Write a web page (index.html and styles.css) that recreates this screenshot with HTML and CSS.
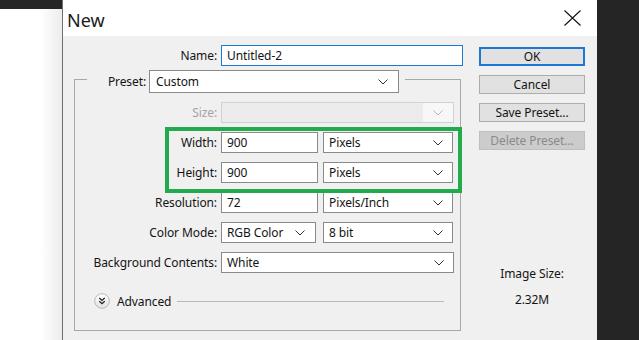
FILE: index.html
```html
<!DOCTYPE html>
<html>
<head>
<meta charset="utf-8">
<link rel="stylesheet" href="styles.css">
</head>
<body>
<div class="screen">
  <div class="backdrop">
    <div class="backdrop-bar"></div>
  </div>
  <div class="dialog">
    <div class="titlebar">
      <span class="title">New</span>
      <svg class="close" width="17" height="16" viewBox="0 0 17 16"><path d="M0.5 0.5 L16.5 15.5 M16.5 0.5 L0.5 15.5" stroke="#111" stroke-width="1.1" fill="none"/></svg>
    </div>
    <div class="content">
      <div class="form">
        <div class="row name-row">
          <label class="lbl name-lbl">Name:</label>
          <div class="field name-field focused">Untitled-2</div>
        </div>
        <fieldset class="group">
          <legend class="legend">
            <span class="legend-lbl">Preset:</span>
            <div class="field select preset-select">Custom<svg class="chev" width="10" height="6" viewBox="0 0 10 6"><polyline points="0.5,0.5 5,5 9.5,0.5" fill="none" stroke="#333" stroke-width="1"/></svg></div>
          </legend>
          <div class="row">
            <label class="lbl disabled-lbl">Size:</label>
            <div class="field select disabled full"><span class="dis-arrow"><svg class="chev" width="10" height="6" viewBox="0 0 10 6"><polyline points="0.5,0.5 5,5 9.5,0.5" fill="none" stroke="#b8b8b8" stroke-width="1"/></svg></span></div>
          </div>
          <div class="row">
            <label class="lbl">Width:</label>
            <div class="field num">900</div>
            <div class="field select unit">Pixels<svg class="chev" width="10" height="6" viewBox="0 0 10 6"><polyline points="0.5,0.5 5,5 9.5,0.5" fill="none" stroke="#333" stroke-width="1"/></svg></div>
          </div>
          <div class="row">
            <label class="lbl">Height:</label>
            <div class="field num">900</div>
            <div class="field select unit">Pixels<svg class="chev" width="10" height="6" viewBox="0 0 10 6"><polyline points="0.5,0.5 5,5 9.5,0.5" fill="none" stroke="#333" stroke-width="1"/></svg></div>
          </div>
          <div class="row">
            <label class="lbl">Resolution:</label>
            <div class="field num">72</div>
            <div class="field select unit">Pixels/Inch<svg class="chev" width="10" height="6" viewBox="0 0 10 6"><polyline points="0.5,0.5 5,5 9.5,0.5" fill="none" stroke="#333" stroke-width="1"/></svg></div>
          </div>
          <div class="row">
            <label class="lbl">Color Mode:</label>
            <div class="field select mode">RGB Color<svg class="chev" width="10" height="6" viewBox="0 0 10 6"><polyline points="0.5,0.5 5,5 9.5,0.5" fill="none" stroke="#333" stroke-width="1"/></svg></div>
            <div class="field select bits">8 bit<svg class="chev" width="10" height="6" viewBox="0 0 10 6"><polyline points="0.5,0.5 5,5 9.5,0.5" fill="none" stroke="#333" stroke-width="1"/></svg></div>
          </div>
          <div class="row">
            <label class="lbl">Background Contents:</label>
            <div class="field select full">White<svg class="chev" width="10" height="6" viewBox="0 0 10 6"><polyline points="0.5,0.5 5,5 9.5,0.5" fill="none" stroke="#333" stroke-width="1"/></svg></div>
          </div>
          <div class="advanced">
            <svg class="adv-icon" width="16" height="16" viewBox="0 0 16 16">
              <defs><linearGradient id="g" x1="0" y1="0" x2="0" y2="1"><stop offset="0" stop-color="#ffffff"/><stop offset="1" stop-color="#e2e2e2"/></linearGradient></defs>
              <circle cx="8" cy="8" r="7.3" fill="url(#g)" stroke="#b9b9b9" stroke-width="1"/>
              <polyline points="5.3,5 8,7.4 10.7,5" fill="none" stroke="#222" stroke-width="1.3"/>
              <polyline points="5.3,8.3 8,10.7 10.7,8.3" fill="none" stroke="#222" stroke-width="1.3"/>
            </svg>
            <span class="adv-text">Advanced</span>
            <span class="adv-line"></span>
          </div>
        </fieldset>
      </div>
      <div class="side">
        <button class="btn ok">OK</button>
        <button class="btn">Cancel</button>
        <button class="btn">Save Preset...</button>
        <button class="btn off">Delete Preset...</button>
        <div class="size-lbl">Image Size:</div>
        <div class="size-val">2.32M</div>
      </div>
    </div>
  </div>
  <div class="dark-right"></div>
  <div class="highlight"></div>
</div>
</body>
</html>
```

FILE: styles.css
```css
* { box-sizing: border-box; }
html, body { margin: 0; padding: 0; }
body {
  width: 639px;
  height: 340px;
  overflow: hidden;
  font-family: "Noto Sans", "Open Sans", sans-serif;
  font-size: 12px;
  letter-spacing: -0.1px;
  color: #141414;
}
.screen {
  position: relative;
  display: flex;
  width: 639px;
  height: 340px;
}
.backdrop {
  width: 62px;
  height: 340px;
  background: linear-gradient(to right, #ffffff 0, #ffffff 40px, #ececec 62px);
}
.backdrop-bar {
  height: 9px;
  background: #262626;
}
.dialog {
  width: 535px;
  height: 340px;
  border-left: 1px solid #6f6f6f;
  background: #f0f0f0;
  display: flex;
  flex-direction: column;
}
.titlebar {
  height: 36px;
  background: #ffffff;
  display: flex;
  align-items: center;
  justify-content: space-between;
  padding: 0 16px 0 4px;
}
.title {
  font-size: 18px;
  letter-spacing: 0;
  color: #1a1a1a;
  line-height: 20px;
  margin-top: 4px;
}
.close { display: block; margin-top: 0; }
.content {
  display: flex;
  padding-top: 9px;
}
.form { width: 400px; }
.row {
  display: flex;
  align-items: center;
  height: 21px;
  gap: 4px;
}
.lbl {
  text-align: right;
  white-space: nowrap;
  width: 142px;
}
.name-lbl { width: 154px; }
.field {
  height: 21px;
  background: #fff;
  border: 1px solid #8a8a8a;
  display: flex;
  align-items: center;
  padding-left: 5px;
  white-space: nowrap;
  color: #141414;
}
.name-field { width: 242px; }
.focused { border-color: #1b78d4; }
.select { justify-content: space-between; padding-right: 9px; }
.chev { display: block; flex: none; }
.group {
  margin: 0 0 0 11px;
  width: 387px;
  border: 1px solid #a8a8a8;
  padding: 9px 0 21px 0;
  display: flex;
  flex-direction: column;
  gap: 9px;
}
.legend {
  margin-left: 12px;
  padding: 4px 6px 0 0;
  display: flex;
  align-items: center;
}
.legend-lbl {
  width: 62px;
  padding-right: 3px;
  text-align: right;
}
.preset-select { width: 250px; height: 23px; padding-left: 6px; padding-right: 10px; }
.disabled-lbl { color: #a3a3a3; }
.disabled {
  background: #ececec;
  border-color: #d2d2d2;
  padding: 0;
  justify-content: flex-end;
}
.dis-arrow {
  width: 30px;
  height: 100%;
  background: #f7f7f7;
  display: flex;
  align-items: center;
  justify-content: center;
}
.full { width: 233px; }
.num { width: 97px; }
.unit { width: 130px; margin-left: 1px; }
.mode { width: 95px; padding-right: 10px; }
.bits { width: 130px; margin-left: 3px; }
.advanced {
  display: flex;
  align-items: center;
  height: 16px;
  margin-top: 11px;
  padding-left: 19px;
}
.adv-icon { display: block; flex: none; }
.adv-text { margin-left: 7px; }
.adv-line {
  flex: none;
  width: 267px;
  margin-left: 6px;
  height: 1px;
  background: #b9b9b9;
}
.side {
  margin-left: 16px;
  width: 106px;
  padding-top: 2px;
  display: flex;
  flex-direction: column;
  gap: 9px;
}
.btn {
  height: 19px;
  width: 106px;
  background: #e1e1e1;
  border: 1px solid #adadad;
  font-family: inherit;
  font-size: 12px;
  letter-spacing: -0.1px;
  color: #141414;
  padding: 0;
  line-height: 16px;
}
.ok { border: 2px solid #1b78d4; }
.off { background: #cccccc; border-color: #bfbfbf; color: #8a8a8a; }
.size-lbl { text-align: center; margin-top: 107px; line-height: 16px; }
.size-val { text-align: center; line-height: 16px; margin-top: 1px; }
.dark-right {
  flex: 1;
  background: #252525;
}
.highlight {
  position: absolute;
  left: 165px;
  top: 127px;
  width: 297px;
  height: 66px;
  border: 4px solid #22aa4d;
}
```
